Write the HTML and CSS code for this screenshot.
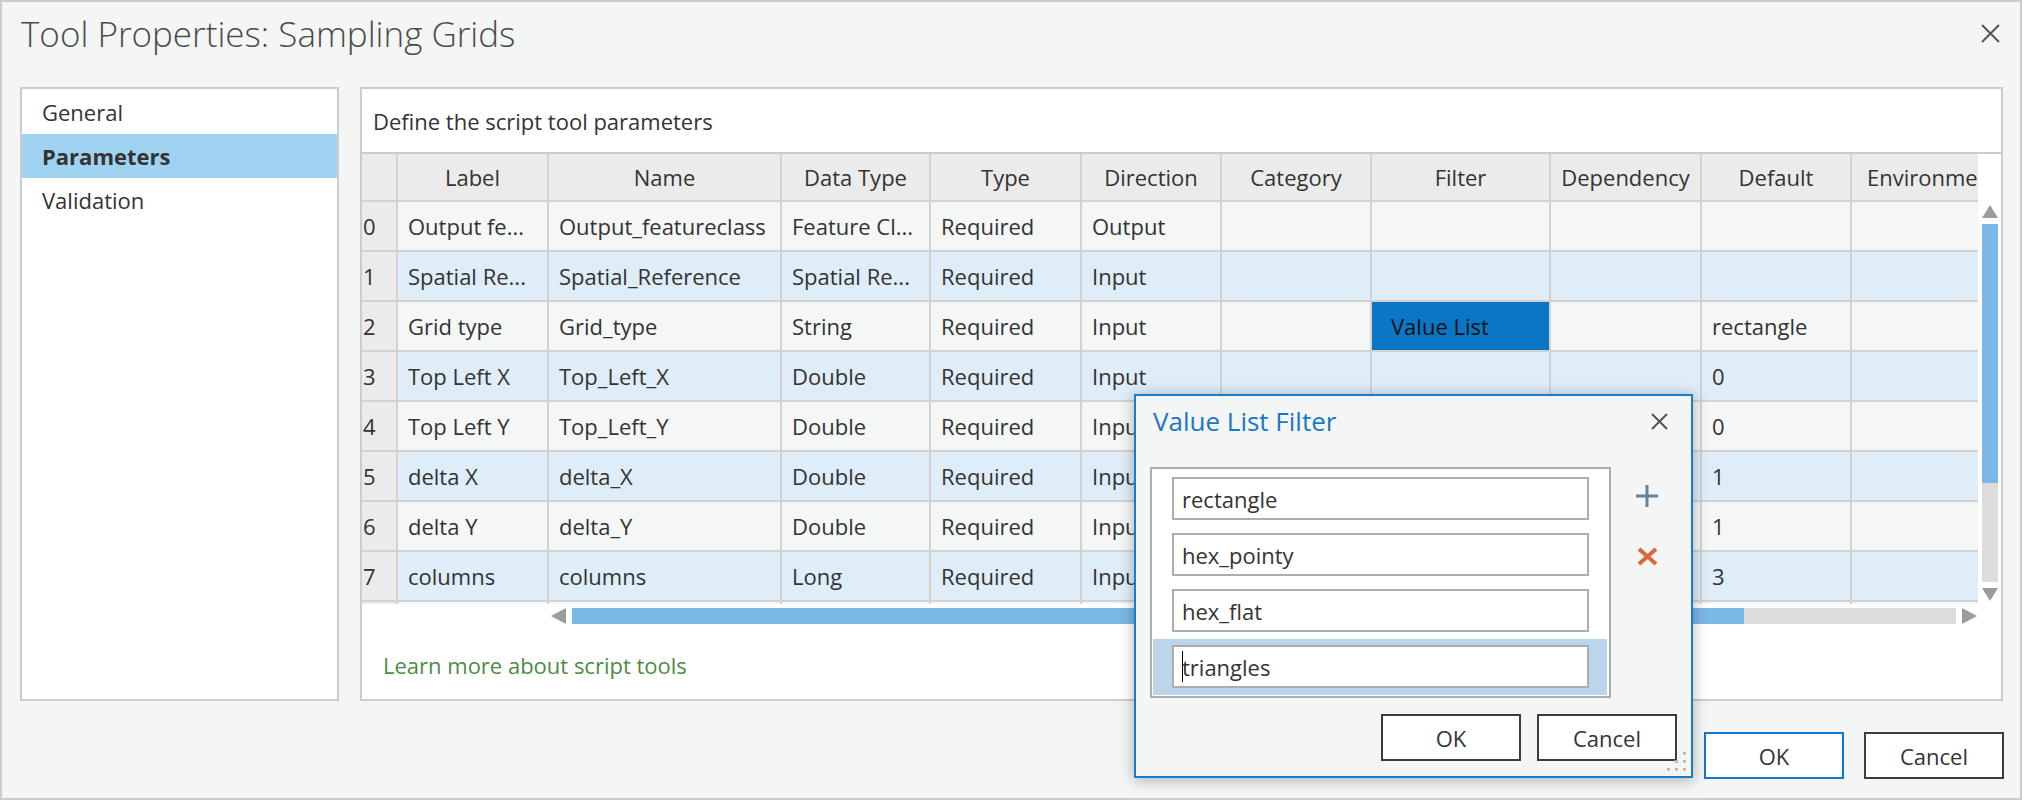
FILE: index.html
```html
<!DOCTYPE html>
<html lang="en">

<head>
    <meta charset="UTF-8">
    <title>Tool Properties: Sampling Grids</title>
    <link rel="stylesheet" href="styles.css">
</head>

<body>
    <div class="window">

        <!-- title bar -->
        <header class="titlebar">
            <h1>Tool Properties: Sampling Grids</h1>
            <button class="close-btn" aria-label="Close">
                <svg width="19" height="19" viewBox="0 0 19 19"><path d="M1 1L18 18M18 1L1 18" stroke="#555" stroke-width="2" fill="none"/></svg>
            </button>
        </header>

        <div class="main">
            <nav class="nav">
                <div class="nav-item">General</div>
                <div class="nav-item active">Parameters</div>
                <div class="nav-item">Validation</div>
            </nav>

            <section class="content">
                <div class="desc">Define the script tool parameters</div>

                <div class="grid-area">
                    <div class="grid">
                        <div class="row head">
                            <div class="cell idx"></div>
                            <div class="cell">Label</div>
                            <div class="cell">Name</div>
                            <div class="cell">Data Type</div>
                            <div class="cell">Type</div>
                            <div class="cell">Direction</div>
                            <div class="cell">Category</div>
                            <div class="cell">Filter</div>
                            <div class="cell">Dependency</div>
                            <div class="cell">Default</div>
                            <div class="cell clipped">Environment</div>
                        </div>
                        <div class="row">
                            <div class="cell idx">0</div><div class="cell">Output fe...</div><div class="cell">Output_featureclass</div><div class="cell">Feature Cl...</div><div class="cell">Required</div><div class="cell">Output</div><div class="cell"></div><div class="cell"></div><div class="cell"></div><div class="cell"></div><div class="cell"></div>
                        </div>
                        <div class="row alt">
                            <div class="cell idx">1</div><div class="cell">Spatial Re...</div><div class="cell">Spatial_Reference</div><div class="cell">Spatial Re...</div><div class="cell">Required</div><div class="cell">Input</div><div class="cell"></div><div class="cell"></div><div class="cell"></div><div class="cell"></div><div class="cell"></div>
                        </div>
                        <div class="row">
                            <div class="cell idx">2</div><div class="cell">Grid type</div><div class="cell">Grid_type</div><div class="cell">String</div><div class="cell">Required</div><div class="cell">Input</div><div class="cell"></div><div class="cell selected">Value List</div><div class="cell"></div><div class="cell">rectangle</div><div class="cell"></div>
                        </div>
                        <div class="row alt">
                            <div class="cell idx">3</div><div class="cell">Top Left X</div><div class="cell">Top_Left_X</div><div class="cell">Double</div><div class="cell">Required</div><div class="cell">Input</div><div class="cell"></div><div class="cell"></div><div class="cell"></div><div class="cell">0</div><div class="cell"></div>
                        </div>
                        <div class="row">
                            <div class="cell idx">4</div><div class="cell">Top Left Y</div><div class="cell">Top_Left_Y</div><div class="cell">Double</div><div class="cell">Required</div><div class="cell">Input</div><div class="cell"></div><div class="cell"></div><div class="cell"></div><div class="cell">0</div><div class="cell"></div>
                        </div>
                        <div class="row alt">
                            <div class="cell idx">5</div><div class="cell">delta X</div><div class="cell">delta_X</div><div class="cell">Double</div><div class="cell">Required</div><div class="cell">Input</div><div class="cell"></div><div class="cell"></div><div class="cell"></div><div class="cell">1</div><div class="cell"></div>
                        </div>
                        <div class="row">
                            <div class="cell idx">6</div><div class="cell">delta Y</div><div class="cell">delta_Y</div><div class="cell">Double</div><div class="cell">Required</div><div class="cell">Input</div><div class="cell"></div><div class="cell"></div><div class="cell"></div><div class="cell">1</div><div class="cell"></div>
                        </div>
                        <div class="row alt">
                            <div class="cell idx">7</div><div class="cell">columns</div><div class="cell">columns</div><div class="cell">Long</div><div class="cell">Required</div><div class="cell">Input</div><div class="cell"></div><div class="cell"></div><div class="cell"></div><div class="cell">3</div><div class="cell"></div>
                        </div>
                        <div class="row">
                            <div class="cell idx"></div><div class="cell"></div><div class="cell"></div><div class="cell"></div><div class="cell"></div><div class="cell"></div><div class="cell"></div><div class="cell"></div><div class="cell"></div><div class="cell"></div><div class="cell"></div>
                        </div>
                    </div>

                    <!-- vertical scrollbar -->
                    <div class="vscroll">
                        <svg class="arrow" width="16" height="13" viewBox="0 0 16 13"><polygon points="0,13 8,0 16,13" fill="#9b9b9b"/></svg>
                        <div class="vtrack"><div class="vthumb"></div></div>
                        <svg class="arrow" width="16" height="13" viewBox="0 0 16 13"><polygon points="0,0 16,0 8,13" fill="#9b9b9b"/></svg>
                    </div>
                </div>

                <!-- horizontal scrollbar -->
                <div class="hscroll">
                    <svg width="15" height="16" viewBox="0 0 15 16"><polygon points="15,0 15,16 0,8" fill="#9b9b9b"/></svg>
                    <div class="htrack"><div class="hthumb"></div></div>
                    <svg width="15" height="16" viewBox="0 0 15 16"><polygon points="0,0 15,8 0,16" fill="#9b9b9b"/></svg>
                </div>

                <a class="learn" href="#">Learn more about script tools</a>
            </section>
        </div>

        <footer class="footer">
            <button class="btn default">OK</button>
            <button class="btn">Cancel</button>
        </footer>

        <!-- Value List Filter popup -->
        <div class="dialog">
            <div class="dlg-head">
                <h2>Value List Filter</h2>
                <button class="close-btn small" aria-label="Close">
                    <svg width="17" height="17" viewBox="0 0 17 17"><path d="M1 1L16 16M16 1L1 16" stroke="#555" stroke-width="2" fill="none"/></svg>
                </button>
            </div>

            <div class="dlg-body">
                <div class="listbox">
                    <div class="list-row"><div class="list-input">rectangle</div></div>
                    <div class="list-row"><div class="list-input">hex_pointy</div></div>
                    <div class="list-row"><div class="list-input">hex_flat</div></div>
                    <div class="list-row current"><div class="list-input"><span class="caret"></span>triangles</div></div>
                </div>
                <div class="side-tools">
                    <button class="tool-btn" aria-label="Add">
                        <svg width="24" height="24" viewBox="0 0 24 24"><path d="M12 1V23M1 12H23" stroke="#64849e" stroke-width="3" fill="none"/></svg>
                    </button>
                    <button class="tool-btn" aria-label="Remove">
                        <svg width="21" height="19" viewBox="0 0 21 19"><path d="M2 2L19 17M19 2L2 17" stroke="#d9673f" stroke-width="4" fill="none"/></svg>
                    </button>
                </div>
            </div>

            <div class="dlg-foot">
                <button class="btn">OK</button>
                <button class="btn">Cancel</button>
            </div>

            <svg class="grip" width="19" height="19" viewBox="0 0 19 19">
                <rect x="16" y="0" width="3" height="3" fill="#bdbdbd"/>
                <rect x="8" y="8" width="3" height="3" fill="#bdbdbd"/>
                <rect x="16" y="8" width="3" height="3" fill="#bdbdbd"/>
                <rect x="0" y="16" width="3" height="3" fill="#bdbdbd"/>
                <rect x="8" y="16" width="3" height="3" fill="#bdbdbd"/>
                <rect x="16" y="16" width="3" height="3" fill="#bdbdbd"/>
            </svg>
        </div>

    </div>
</body>

</html>
```

FILE: styles.css
```css
* {
    margin: 0;
    padding: 0;
    box-sizing: border-box;
}

body {
    background: #ffffff;
    font-family: "Open Sans", "Noto Sans", sans-serif;
    font-size: 22px;
    color: #333333;
}

button {
    font-family: inherit;
    background: none;
    border: none;
    color: inherit;
}

/* outer window */
.window {
    position: relative;
    width: 2022px;
    height: 800px;
    border: 2px solid #cccccc;
    background: #f4f6f6;
}

.titlebar {
    height: 85px;
    display: flex;
    justify-content: space-between;
    align-items: flex-start;
    padding: 0 20px 0 19px;
}

.titlebar h1 {
    margin-top: 12px;
    font-size: 35px;
    line-height: 40px;
    font-weight: 300;
    color: #4b4b4b;
}

.close-btn {
    display: flex;
    margin-top: 22px;
}

/* nav + content */
.main {
    display: flex;
    gap: 21px;
    height: 614px;
    padding: 0 17px 0 18px;
}

.nav {
    flex: 0 0 319px;
    border: 2px solid #cccccc;
    background: #ffffff;
    padding-top: 1px;
}

.nav-item {
    height: 44px;
    display: flex;
    align-items: center;
    padding-left: 20px;
}

.nav-item.active {
    background: #a0d3f1;
    font-weight: bold;
}

.content {
    flex: 1;
    min-width: 0;
    border: 2px solid #cccccc;
    background: #ffffff;
    display: flex;
    flex-direction: column;
}

.desc {
    height: 65px;
    display: flex;
    align-items: center;
    padding-left: 11px;
    border-bottom: 2px solid #cccccc;
}

/* parameter grid */
.grid-area {
    display: flex;
    height: 450px;
}

.grid {
    flex: 1;
    min-width: 0;
    overflow: hidden;
}

.row {
    display: grid;
    grid-template-columns: 36px 151px 233px 149px 151px 140px 150px 179px 151px 150px 150px;
    height: 50px;
    background: #f5f7f7;
}

.row.alt {
    background: #deedf8;
}

.row.head {
    height: 48px;
    background: #ebebeb;
}

.cell {
    display: flex;
    align-items: center;
    padding: 0 10px;
    white-space: nowrap;
    overflow: hidden;
    border-right: 2px solid #d2d2d2;
    border-bottom: 2px solid #d2d2d2;
}

.head .cell {
    justify-content: center;
    padding: 0;
}

/* last header is scrolled out of view, text starts where it would if centred */
.head .cell.clipped {
    justify-content: flex-start;
    padding-left: 15px;
}

.cell.idx {
    background: #ebebeb;
    padding-left: 1px;
}

.cell.selected {
    background: #0a77c4;
    color: #111111;
    padding-left: 19px;
}

.vscroll {
    flex: 0 0 23px;
    display: flex;
    flex-direction: column;
    align-items: center;
    padding-top: 51px;
    gap: 6px;
}

.vtrack {
    width: 16px;
    height: 358px;
    background: #dcdcdc;
}

.vthumb {
    height: 259px;
    background: #7ab9e5;
}

.hscroll {
    display: flex;
    align-items: center;
    gap: 6px;
    height: 16px;
    margin-top: 4px;
    padding-left: 189px;
}

.htrack {
    width: 1384px;
    height: 16px;
    background: #dcdcdc;
}

.hthumb {
    width: 1172px;
    height: 16px;
    background: #7ab9e5;
}

.learn {
    margin-top: 26px;
    margin-left: 21px;
    color: #4e8a47;
    text-decoration: none;
}

/* buttons */
.footer {
    display: flex;
    justify-content: flex-end;
    gap: 20px;
    padding: 31px 16px 0 0;
}

.btn {
    width: 140px;
    height: 47px;
    border: 2px solid #3c3c3c;
    background: #ffffff;
    font-size: 22px;
    color: #333333;
}

.btn.default {
    border-color: #1177d1;
}

/* Value List Filter popup */
.dialog {
    position: absolute;
    left: 1132px;
    top: 392px;
    width: 559px;
    height: 384px;
    border: 2px solid #1a7bc9;
    background: #f4f6f6;
    box-shadow: 0 2px 14px rgba(0, 0, 0, 0.3);
}

.dlg-head {
    height: 71px;
    display: flex;
    justify-content: space-between;
    align-items: flex-start;
    padding: 0 23px 0 17px;
}

.dlg-head h2 {
    margin-top: 7px;
    font-size: 26px;
    font-weight: normal;
    color: #1a78c2;
}

.close-btn.small {
    margin-top: 17px;
}

.dlg-body {
    display: flex;
    padding-left: 14px;
}

.listbox {
    width: 461px;
    height: 231px;
    border: 2px solid #adadad;
    background: #ffffff;
    padding: 1.5px 2px 0 1px;
}

.list-row {
    height: 56px;
    padding: 6.5px 18px 6.5px 19px;
}

.list-row.current {
    background: #bdd5ea;
}

.list-input {
    height: 43px;
    border: 2px solid #adadad;
    background: #ffffff;
    display: flex;
    align-items: center;
    padding-left: 8px;
}

.caret {
    width: 1px;
    height: 31px;
    background: #000000;
    margin-right: -1px;
}

.side-tools {
    display: flex;
    flex-direction: column;
    gap: 30px;
    margin-left: 21px;
    padding-top: 14px;
}

.tool-btn {
    width: 30px;
    height: 30px;
    display: flex;
    align-items: center;
    justify-content: center;
}

.dlg-foot {
    display: flex;
    justify-content: flex-end;
    gap: 16px;
    margin-top: 16px;
    padding-right: 14px;
}

.grip {
    position: absolute;
    right: 5px;
    bottom: 5px;
}
```
